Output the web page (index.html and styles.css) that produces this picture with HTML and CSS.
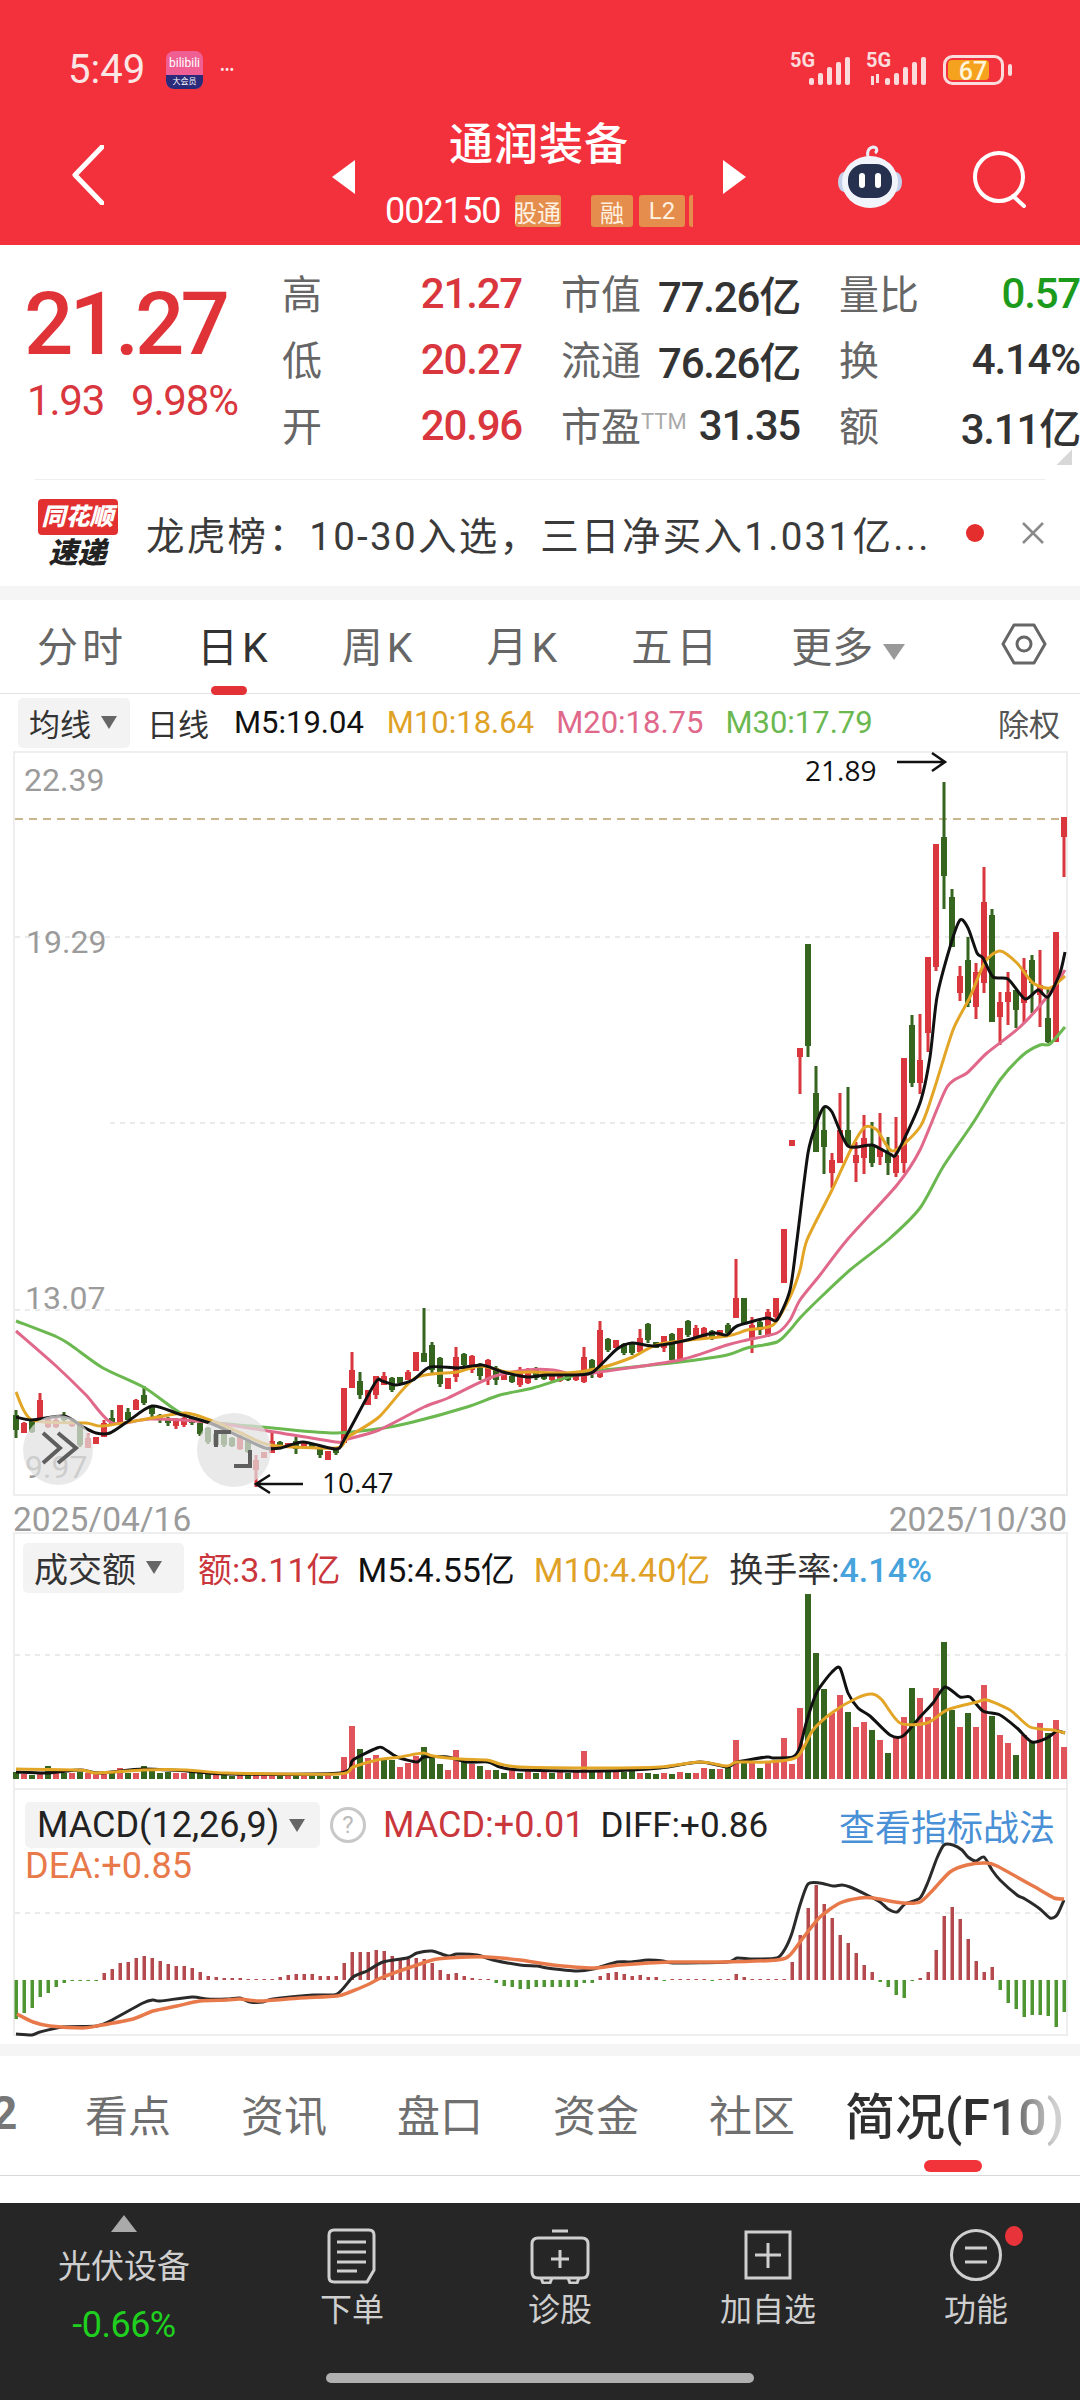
FILE: index.html
```html
<!DOCTYPE html>
<html lang="zh-CN">
<head>
<meta charset="UTF-8">
<meta name="viewport" content="width=device-width, initial-scale=1.0">
<title>通润装备</title>
<link rel="stylesheet" href="styles.css">
</head>
<body>

<header class="topbar">
    <div class="status">
        <span class="clock">5:49</span>
        <div class="app-badge">
            <span class="app-name">bilibili</span>
            <span class="app-sub">大会员</span>
        </div>
        <span class="status-dots">•••</span>
        <svg class="signal" width="222" height="40" viewBox="0 0 222 40">
            <text x="0" y="17" class="signal-text">5G</text>
            <rect x="19" y="28" width="5" height="7" rx="2"/><rect x="28" y="23" width="5" height="12" rx="2"/><rect x="37" y="17" width="5" height="18" rx="2"/><rect x="46" y="12" width="5" height="23" rx="2"/><rect x="55" y="7" width="5" height="28" rx="2"/>
            <text x="76" y="17" class="signal-text">5G</text>
            <rect x="81" y="26" width="3" height="9"/><rect x="86" y="24" width="3" height="9"/>
            <rect x="95" y="28" width="5" height="7" rx="2"/><rect x="104" y="23" width="5" height="12" rx="2"/><rect x="113" y="17" width="5" height="18" rx="2"/><rect x="122" y="12" width="5" height="23" rx="2"/><rect x="131" y="7" width="5" height="28" rx="2"/>
            <rect x="154.500" y="6.500" width="58" height="27" rx="8" fill="none" stroke="#fbdcdc" stroke-width="3"/>
            <rect x="158" y="10" width="41" height="20" rx="4" fill="#f5a21f"/>
            <text x="183" y="30" class="battery-text" text-anchor="middle">67</text>
            <rect x="218" y="14" width="4" height="12" rx="2"/>
        </svg>
    </div>
    <div class="stock-nav">
        <svg class="nav-back" width="32" height="60" viewBox="0 0 32 60"><path d="M30 2 L3 30 L30 58" fill="none" stroke="#fff" stroke-width="5" stroke-linecap="round" stroke-linejoin="round"/></svg>
        <div class="stock-switch">
            <span class="tri tri-left"></span>
            <div class="stock-head">
                <div class="stock-name">通润装备</div>
                <div class="stock-code-row">
                    <span class="stock-code">002150</span>
                    <div class="tags">
                        <span class="tag tag-cut">深股通</span>
                        <span class="tag tag-rong">融</span>
                        <span class="tag tag-l2">L2</span>
                        <span class="tag tag-end"></span>
                    </div>
                </div>
            </div>
            <span class="tri tri-right"></span>
        </div>
        <svg class="nav-robot" width="68" height="64" viewBox="0 0 68 64">
            <path d="M33 14 C30 8 32 3 37 2 C41 2 42 6 39 8" fill="none" stroke="#e9edf6" stroke-width="3"/>
            <ellipse cx="8" cy="37" rx="6" ry="10" fill="#c3d0ea"/>
            <ellipse cx="60" cy="37" rx="6" ry="10" fill="#c3d0ea"/>
            <ellipse cx="34" cy="37" rx="28" ry="26" fill="#f2f4fb"/>
            <rect x="12" y="19" width="44" height="34" rx="16" fill="#26304f"/>
            <rect x="23" y="28" width="6" height="15" rx="3" fill="#fff"/>
            <rect x="39" y="28" width="6" height="15" rx="3" fill="#fff"/>
        </svg>
        <svg class="nav-search" width="56" height="58" viewBox="0 0 56 58"><circle cx="27" cy="27" r="24" fill="none" stroke="#fff" stroke-width="4"/><path d="M41 46 L52 56" stroke="#fff" stroke-width="4" stroke-linecap="round"/></svg>
    </div>
</header>

<section class="quote">
    <div class="quote-main">
        <div class="price">21.27</div>
        <div class="price-change"><span>1.93</span><span>9.98%</span></div>
    </div>
    <div class="quote-grid">
        <div class="cell"><span class="lbl">高</span><span class="val red">21.27</span></div>
        <div class="cell"><span class="lbl">市值</span><span class="val">77.26亿</span></div>
        <div class="cell"><span class="lbl">量比</span><span class="val green">0.57</span></div>
        <div class="cell"><span class="lbl">低</span><span class="val red">20.27</span></div>
        <div class="cell"><span class="lbl">流通</span><span class="val">76.26亿</span></div>
        <div class="cell"><span class="lbl">换</span><span class="val">4.14%</span></div>
        <div class="cell"><span class="lbl">开</span><span class="val red">20.96</span></div>
        <div class="cell"><span class="lbl">市盈<sup class="ttm">TTM</sup></span><span class="val">31.35</span></div>
        <div class="cell"><span class="lbl">额</span><span class="val">3.11亿</span></div>
    </div>
    <span class="quote-fold"></span>
</section>

<section class="news">
    <div class="news-logo">
        <span class="news-logo-top">同花顺</span>
        <span class="news-logo-bottom">速递</span>
    </div>
    <div class="news-text">龙虎榜：10-30入选，三日净买入1.031亿...</div>
    <span class="news-dot"></span>
    <svg class="news-close" width="24" height="24" viewBox="0 0 24 24"><path d="M2 2 L22 22 M22 2 L2 22" stroke="#8a8a8a" stroke-width="2.5"/></svg>
</section>
<div class="gap"></div>

<nav class="period-tabs">
    <span class="period">分时</span>
    <span class="period active">日K</span>
    <span class="period">周K</span>
    <span class="period">月K</span>
    <span class="period">五日</span>
    <span class="period more">更多<i class="caret-more"></i></span>
    <svg class="period-set" width="46" height="46" viewBox="0 0 46 46"><path d="M13 4 H33 L44 23 L33 42 H13 L2 23 Z" fill="none" stroke="#666" stroke-width="3" stroke-linejoin="round"/><circle cx="23" cy="23" r="7" fill="none" stroke="#666" stroke-width="3"/></svg>
</nav>

<div class="legend legend-k">
    <span class="chip chip-ma">均线<i class="caret"></i></span>
    <span class="legend-day">日线</span>
    <span class="m5">M5:19.04</span>
    <span class="m10">M10:18.64</span>
    <span class="m20">M20:18.75</span>
    <span class="m30">M30:17.79</span>
    <span class="legend-right">除权</span>
</div>

<div class="panel panel-k">
    <svg id="klineChart" class="chart" width="1080" height="741" viewBox="0 753 1080 741">
        <line x1="15" x2="1066" y1="819" y2="819" class="line-close"/>
        <line x1="15" x2="1066" y1="937" y2="937" class="line-grid"/>
        <line x1="110" x2="1066" y1="1123" y2="1123" class="line-grid"/>
        <line x1="15" x2="1066" y1="1310" y2="1310" class="line-grid"/>
        <text x="24" y="791" class="axis-label">22.39</text>
        <text x="26" y="953" class="axis-label">19.29</text>
        <text x="25" y="1309" class="axis-label">13.07</text>
        <text x="25" y="1478" class="axis-label">9.97</text>
        <g id="klineBars"></g>
        <g id="klineLines"></g>
        <text x="805" y="781" class="mark-label">21.89</text>
        <path d="M897 762 H945 M932 753 L945 762 L932 771" class="mark-arrow"/>
        <path d="M303 1484 H256 M270 1475 L256 1484 L270 1493" class="mark-arrow"/>
        <text x="322" y="1493" class="mark-label">10.47</text>
        <circle cx="58" cy="1450" r="35" class="float-btn"/>
        <path d="M43 1433 L60 1448 L43 1463 M58 1433 L76 1448 L58 1463" class="float-icon"/>
        <circle cx="234" cy="1450" r="37" class="float-btn"/>
        <path d="M216 1447 V1432 H231 M250 1450 V1466 H234" class="float-icon"/>
    </svg>
</div>

<div class="date-row"><span>2025/04/16</span><span>2025/10/30</span></div>

<div class="panel panel-vol">
    <div class="legend legend-vol">
        <span class="chip chip-vol">成交额<i class="caret"></i></span>
        <span class="vol-amount">额:3.11亿</span>
        <span class="vol-m5">M5:4.55亿</span>
        <span class="vol-m10">M10:4.40亿</span>
        <span class="vol-turn">换手率:<b>4.14%</b></span>
    </div>
    <svg id="volChart" class="chart" width="1080" height="193" viewBox="0 1595 1080 193">
        <line x1="15" x2="1066" y1="1655" y2="1655" class="line-grid"/>
        <g id="volBars"></g>
        <g id="volLines"></g>
    </svg>
</div>

<div class="panel panel-macd">
    <svg id="macdChart" class="chart" width="1080" height="244" viewBox="0 1790 1080 244">
        <line x1="15" x2="1066" y1="1913" y2="1913" class="line-grid"/>
        <g id="macdBars"></g>
        <g id="macdLines"></g>
    </svg>
    <div class="macd-legend">
        <div class="macd-row">
            <span class="chip chip-macd">MACD(12,26,9)<i class="caret"></i></span>
            <span class="help">?</span>
            <span class="macd-val">MACD:+0.01</span>
            <span class="diff-val">DIFF:+0.86</span>
            <span class="macd-link">查看指标战法</span>
        </div>
        <div class="dea-val">DEA:+0.85</div>
    </div>
</div>

<div class="gap gap-low"></div>

<nav class="info-tabs">
    <span class="info-cut">2</span>
    <span class="info">看点</span>
    <span class="info">资讯</span>
    <span class="info">盘口</span>
    <span class="info">资金</span>
    <span class="info">社区</span>
    <span class="info info-active"><em>简况(F10)</em></span>
</nav>

<footer class="bottom">
    <div class="bottom-items">
        <div class="sector">
            <span class="sector-up"></span>
            <span class="sector-name">光伏设备</span>
            <span class="sector-pct">-0.66%</span>
        </div>
        <div class="action">
            <svg width="50" height="56" viewBox="0 0 50 56" class="action-icon">
                <path d="M7 2 H42 Q47 2 47 7 V42 L40 54 H7 Q2 54 2 49 V7 Q2 2 7 2 Z M10 14 H39 M10 24 H39 M10 34 H39 M10 43 H30"/>
            </svg>
            <span>下单</span>
        </div>
        <div class="action">
            <svg width="60" height="56" viewBox="0 0 60 56" class="action-icon">
                <path d="M22 3 H38 M8 10 H52 Q58 10 58 16 V44 Q58 50 52 50 H8 Q2 50 2 44 V16 Q2 10 8 10 Z M30 22 V40 M21 31 H39 M11 50 L13 55 H20 L22 50 M38 50 L40 55 H47 L49 50"/>
            </svg>
            <span>诊股</span>
        </div>
        <div class="action">
            <svg width="50" height="56" viewBox="0 0 50 56" class="action-icon">
                <path d="M3 4 H47 V50 H3 Z M25 15 V40 M12 27 H38"/>
            </svg>
            <span>加自选</span>
        </div>
        <div class="action action-fn">
            <svg width="54" height="56" viewBox="0 0 54 56" class="action-icon">
                <circle cx="27" cy="27" r="24.5"/>
                <path d="M16 20 H38 M16 34 H38"/>
            </svg>
            <i class="fn-dot"></i>
            <span>功能</span>
        </div>
    </div>
    <div class="home-bar"></div>
</footer>

<script src="chart.js"></script>
</body>
</html>
```

FILE: styles.css
```css
* {
    box-sizing: border-box;
}
body {
    margin: 0;
    width: 1080px;
    height: 2400px;
    overflow: hidden;
    background: #fff;
    color: #333;
    font-family: Roboto, "Noto Sans CJK SC", sans-serif;
}

/* red header */
.topbar {
    height: 245px;
    overflow: hidden;
    background: #f3313d;
    color: #fff;
}
.status {
    display: flex;
    align-items: center;
    height: 90px;
    padding: 50px 0 0 68px;
}
.clock {
    width: 98px;
    font-size: 40px;
    line-height: 40px;
    color: #fbe6e6;
}
.app-badge {
    display: flex;
    flex-direction: column;
    width: 37px;
    height: 38px;
    border-radius: 8px;
    overflow: hidden;
    text-align: center;
    background: #ef5f93;
}
.app-name {
    height: 24px;
    font-size: 12px;
    line-height: 24px;
}
.app-sub {
    height: 14px;
    font-size: 8px;
    line-height: 14px;
    background: #2b2a7a;
}
.status-dots {
    width: 32px;
    margin-left: 17px;
    font-size: 14px;
    letter-spacing: 0;
    color: #fbe6e6;
}
.signal {
    margin-left: 538px;
    fill: #fbdcdc;
}
.signal-text {
    font-size: 20px;
    font-weight: 700;
}
.battery-text {
    font-size: 25px;
    font-weight: 500;
    fill: #fff3d8;
}
.stock-nav {
    display: flex;
    align-items: flex-start;
    padding: 30px 0 0 72px;
}
.nav-back {
    margin-top: 25px;
}
.stock-switch {
    display: flex;
    justify-content: space-between;
    width: 414px;
    margin-left: 228px;
}
.tri {
    width: 0;
    height: 0;
    margin-top: 40px;
    border-top: 17px solid transparent;
    border-bottom: 17px solid transparent;
}
.tri-left {
    border-right: 23px solid #fff;
}
.tri-right {
    border-left: 23px solid #fff;
}
.stock-head {
    width: 308px;
    text-align: center;
}
.stock-name {
    font-size: 44px;
    line-height: 50px;
    letter-spacing: 1px;
    font-weight: 500;
}
.stock-code-row {
    display: flex;
    align-items: center;
    height: 32px;
    margin-top: 25px;
}
.stock-code {
    width: 130px;
    font-size: 36px;
    line-height: 32px;
    letter-spacing: -1px;
    text-align: left;
}
.tags {
    display: flex;
    flex: 1;
    overflow: hidden;
}
.tag {
    display: flex;
    align-items: center;
    justify-content: center;
    flex: none;
    height: 32px;
    border-radius: 3px;
    background: #e58d4c;
    color: #fff1e2;
    font-size: 24px;
}
.tag-cut {
    justify-content: flex-end;
    width: 46px;
    overflow: hidden;
    margin-right: 30px;
    white-space: nowrap;
}
.tag-rong {
    width: 42px;
    margin-right: 6px;
}
.tag-l2 {
    width: 46px;
    margin-right: 4px;
}
.tag-end {
    width: 8px;
}
.nav-robot {
    margin: 25px 0 0 90px;
}
.nav-search {
    margin: 30px 0 0 68px;
}

/* price block */
.quote {
    display: flex;
    position: relative;
    height: 234px;
    padding: 15px 0 0 24px;
}
.quote-main {
    width: 258px;
}
.price {
    margin-top: 19px;
    font-size: 87px;
    line-height: 90px;
    letter-spacing: -4px;
    font-weight: 500;
    color: #df3338;
}
.price-change {
    display: flex;
    gap: 27px;
    margin-top: 10px;
    padding-left: 3px;
    font-size: 42px;
    line-height: 44px;
    letter-spacing: -1.2px;
    color: #d9363e;
}
.quote-grid {
    display: grid;
    grid-template-columns: 240px 239px 241px;
    grid-auto-rows: 66px;
    column-gap: 39px;
}
.cell {
    display: flex;
    justify-content: space-between;
    align-items: center;
}
.lbl {
    margin-top: -3px;
    font-size: 40px;
    color: #666;
    white-space: nowrap;
}
.ttm {
    font-size: 22px;
    line-height: 1;
    color: #aaa;
    vertical-align: 12px;
}
.val {
    font-size: 42px;
    letter-spacing: -1.2px;
    font-weight: 500;
    color: #333;
    white-space: nowrap;
}
.red {
    color: #d9363e;
}
.green {
    color: #1c9a1c;
}
.quote-fold {
    position: absolute;
    right: 8px;
    top: 205px;
    width: 16px;
    height: 15px;
    background: linear-gradient(135deg, transparent 50%, #d8d8d8 50%);
}

/* news ticker */
.news {
    display: flex;
    align-items: center;
    height: 107px;
    margin: 0 35px;
    border-top: 1px solid #eee;
}
.news-logo {
    display: flex;
    flex-direction: column;
    align-items: center;
    width: 81px;
    margin-left: 2px;
    font-style: italic;
    font-weight: 900;
}
.news-logo-top {
    width: 80px;
    height: 36px;
    border-radius: 4px;
    background: #e1302f;
    color: #fff;
    font-size: 24px;
    line-height: 36px;
    text-align: center;
}
.news-logo-bottom {
    margin-top: 3px;
    font-size: 29px;
    line-height: 30px;
    color: #222;
}
.news-text {
    width: 780px;
    margin-left: 28px;
    font-size: 38.5px;
    letter-spacing: 2.3px;
    white-space: nowrap;
    color: #3a3a3a;
}
.news-dot {
    flex: none;
    width: 18px;
    height: 18px;
    margin-left: 40px;
    border-radius: 50%;
    background: #e42d2d;
}
.news-close {
    flex: none;
    margin-left: 37px;
}
.gap {
    height: 14px;
    background: #f5f5f5;
}

/* period tabs */
.period-tabs {
    display: flex;
    align-items: center;
    height: 94px;
    padding: 0 0 6px 37px;
    border-bottom: 1px solid #e3e3e3;
}
.period {
    position: relative;
    margin-right: 70px;
    font-size: 41px;
    color: #666;
    letter-spacing: 4px;
}
.period.active {
    color: #333;
}
.period.active::after {
    content: "";
    position: absolute;
    left: 14px;
    bottom: -21px;
    width: 36px;
    height: 9px;
    border-radius: 5px;
    background: #e33237;
}
.period.more {
    margin-right: 0;
    letter-spacing: 0;
}
.caret-more {
    display: inline-block;
    margin-left: 10px;
    border-top: 16px solid #999;
    border-left: 11px solid transparent;
    border-right: 11px solid transparent;
    vertical-align: 2px;
}
.period-set {
    margin-left: 96px;
}

/* indicator legends */
.legend {
    display: flex;
    align-items: center;
    white-space: nowrap;
}
.legend-k {
    height: 57px;
    padding-left: 18px;
    font-size: 31px;
    color: #111;
}
.chip {
    display: flex;
    align-items: center;
    border-radius: 5px;
    background: #f3f3f3;
    color: #333;
}
.chip-ma {
    width: 112px;
    height: 50px;
    padding-left: 11px;
}
.caret {
    margin-left: 10px;
    border-top: 13px solid #666;
    border-left: 8px solid transparent;
    border-right: 8px solid transparent;
}
.legend-day {
    margin-left: 17px;
    color: #333;
}
.m5 {
    margin-left: 25px;
}
.m10 {
    margin-left: 23px;
    color: #dfa227;
}
.m20 {
    margin-left: 22px;
    color: #e0688a;
}
.m30 {
    margin-left: 22px;
    color: #6ab84f;
}
.legend-right {
    margin-left: auto;
    margin-right: 20px;
    color: #555;
}

/* chart panels */
.panel {
    position: relative;
    width: 1055px;
    margin-left: 13px;
    border: 2px solid #eee;
}
.panel-macd {
    border-top: 0;
}
.chart {
    display: block;
    margin-left: -15px;
    overflow: visible;
}
.line-grid {
    stroke: #e4e4e4;
    stroke-width: 1.5;
    stroke-dasharray: 5 5;
}
.line-close {
    stroke: #c9b68f;
    stroke-width: 2;
    stroke-dasharray: 8 6;
}
.axis-label {
    font-size: 32px;
    fill: #9b9b9b;
}
.mark-label {
    font-family: "Open Sans", sans-serif;
    font-size: 28px;
    fill: #111;
}
.mark-arrow {
    fill: none;
    stroke: #111;
    stroke-width: 2.5;
}
.float-btn {
    fill: rgba(225, 225, 225, 0.72);
}
.float-icon {
    fill: none;
    stroke: #5e5e5e;
    stroke-width: 4;
}
.date-row {
    display: flex;
    justify-content: space-between;
    height: 36px;
    padding: 12px 13px 0 13px;
    font-size: 33.5px;
    line-height: 24px;
    color: #9b9b9b;
}
.legend-vol {
    height: 61px;
    padding: 6px 0 0 8px;
    font-size: 34px;
    color: #111;
}
.chip-vol {
    width: 161px;
    height: 50px;
    padding-left: 11px;
}
.vol-amount {
    margin-left: 14px;
    color: #c9363c;
}
.vol-m5 {
    margin-left: 17px;
}
.vol-m10 {
    margin-left: 19px;
    color: #dfa227;
}
.vol-turn {
    margin-left: 19px;
    color: #333;
}
.vol-turn b {
    font-weight: 500;
    color: #46a3dc;
}
.macd-legend {
    position: absolute;
    left: 10px;
    top: 12px;
    width: 1030px;
    font-size: 36px;
}
.macd-row {
    display: flex;
    align-items: center;
    height: 46px;
    white-space: nowrap;
}
.chip-macd {
    width: 295px;
    height: 46px;
    padding-left: 12px;
    color: #222;
}
.help {
    width: 36px;
    height: 36px;
    margin-left: 10px;
    border: 3px solid #c8c8c8;
    border-radius: 50%;
    font-size: 24px;
    line-height: 30px;
    text-align: center;
    color: #bbb;
}
.macd-val {
    margin-left: 17px;
    color: #c9363c;
}
.diff-val {
    margin-left: 16px;
    font-size: 35px;
    color: #222;
}
.macd-link {
    margin-left: auto;
    font-size: 36px;
    color: #4a90d6;
}
.dea-val {
    line-height: 36px;
    color: #e8794a;
}

/* info tabs */
.gap-low {
    height: 12px;
    margin-top: 8px;
}
.info-tabs {
    display: flex;
    align-items: center;
    height: 120px;
    padding-bottom: 6px;
    overflow: hidden;
    border-bottom: 1px solid #d8d8d8;
}
.info-cut {
    width: 24px;
    margin-left: -9px;
    margin-right: 70px;
    font-size: 46px;
    font-weight: 700;
    color: #777;
}
.info {
    position: relative;
    margin-right: 70px;
    font-size: 43px;
    color: #6f6f6f;
    white-space: nowrap;
}
.info-active {
    margin-left: -20px;
    margin-right: 0;
    font-size: 50px;
    font-weight: 500;
}
.info-active em {
    font-style: normal;
    background: linear-gradient(90deg, #2f2f2f 68%, #d0d0d0 96%);
    -webkit-background-clip: text;
    background-clip: text;
    color: transparent;
}
.info-active::after {
    content: "";
    position: absolute;
    left: 79px;
    bottom: -23px;
    width: 58px;
    height: 12px;
    border-radius: 6px;
    background: #f1333a;
}

/* dark bottom bar */
.bottom {
    height: 197px;
    margin-top: 27px;
    background: #262626;
    color: #cfcfcf;
}
.bottom-items {
    display: flex;
    height: 170px;
}
.sector {
    display: flex;
    flex-direction: column;
    align-items: center;
    width: 248px;
    padding-top: 12px;
}
.sector-up {
    border-bottom: 17px solid #aaa;
    border-left: 13px solid transparent;
    border-right: 13px solid transparent;
}
.sector-name {
    margin-top: 17px;
    font-size: 33px;
    line-height: 36px;
}
.sector-pct {
    margin-top: 22px;
    font-size: 36px;
    line-height: 36px;
    letter-spacing: -0.5px;
    color: #1fd01f;
}
.action {
    display: flex;
    flex-direction: column;
    align-items: center;
    position: relative;
    width: 208px;
    padding-top: 25px;
    font-size: 32px;
    line-height: 36px;
}
.action span {
    margin-top: 8px;
}
.action-icon {
    fill: none;
    stroke: #cfcfcf;
    stroke-width: 3;
}
.fn-dot {
    position: absolute;
    left: 133px;
    top: 23px;
    width: 18px;
    height: 20px;
    border-radius: 50%;
    background: #e8333a;
}
.home-bar {
    width: 428px;
    height: 10px;
    margin-left: 326px;
    border-radius: 5px;
    background: #b0b0b0;
}
```

FILE: chart.js
```js
// candles left to right, one every 8px from x=16: colour, wick top, wick bottom, body top, body bottom
const candles = [
    ['g',1410,1438,1415,1430],['r',1422,1433,1423,1433],['g',1420,1433,1421,1432],['r',1393,1418,1400,1418],
    ['r',1418,1428,1419,1427],['r',1417,1428,1420,1427],['g',1412,1423,1415,1420],['r',1420,1427,1421,1426],
    ['g',1423,1447,1425,1445],['r',1433,1448,1438,1448],['r',1437,1444,1437,1444],['r',1420,1437,1423,1437],
    ['g',1410,1425,1418,1425],['r',1405,1425,1405,1424],['g',1408,1420,1412,1420],['r',1399,1410,1400,1410],
    ['g',1386,1405,1395,1403],['g',1405,1417,1406,1414],['g',1414,1423,1415,1420],['g',1417,1426,1418,1423],
    ['r',1418,1429,1419,1426],['r',1417,1427,1418,1425],['g',1417,1425,1418,1423],['g',1422,1436,1423,1434],
    ['g',1427,1444,1428,1442],['g',1432,1447,1434,1445],['g',1432,1447,1434,1445],['g',1437,1447,1438,1446],
    ['r',1435,1450,1436,1449],['g',1440,1453,1441,1452],['r',1455,1487,1460,1470],['r',1452,1458,1452,1458],
    ['r',1433,1453,1441,1453],['g',1441,1448,1442,1447],['r',1443,1448,1443,1448],['g',1437,1454,1441,1449],
    ['r',1441,1448,1441,1448],['g',1443,1448,1443,1448],['g',1447,1458,1447,1455],['r',1451,1460,1451,1460],
    ['g',1447,1455,1448,1453],['r',1388,1443,1388,1443],['r',1352,1388,1370,1388],['g',1372,1399,1381,1395],
    ['r',1390,1405,1390,1405],['r',1376,1399,1376,1395],['r',1372,1385,1376,1385],['g',1377,1392,1378,1390],
    ['g',1377,1383,1377,1383],['r',1370,1380,1372,1380],['r',1352,1371,1352,1371],['g',1308,1362,1353,1362],
    ['g',1342,1375,1345,1370],['g',1357,1387,1358,1384],['r',1378,1389,1378,1389],['r',1347,1382,1357,1377],
    ['g',1353,1370,1354,1365],['r',1355,1373,1356,1370],['g',1363,1380,1364,1376],['r',1359,1385,1360,1380],
    ['g',1366,1385,1368,1380],['r',1372,1380,1372,1380],['g',1375,1383,1376,1382],['r',1367,1387,1372,1385],
    ['r',1368,1384,1370,1383],['g',1367,1380,1368,1378],['g',1375,1380,1375,1379],['r',1373,1381,1373,1380],
    ['r',1372,1382,1373,1381],['g',1373,1381,1374,1380],['r',1375,1381,1375,1380],['r',1347,1383,1357,1382],
    ['g',1359,1378,1360,1372],['r',1321,1378,1330,1377],['g',1338,1352,1339,1350],['r',1340,1348,1340,1348],
    ['g',1343,1355,1344,1353],['g',1343,1355,1344,1353],['r',1329,1353,1338,1352],['g',1323,1343,1324,1340],
    ['g',1342,1348,1342,1348],['r',1336,1352,1336,1348],['g',1333,1362,1334,1360],['r',1328,1362,1328,1360],
    ['g',1320,1337,1321,1335],['r',1325,1340,1328,1338],['r',1327,1338,1328,1338],['g',1330,1340,1331,1339],
    ['r',1330,1337,1330,1337],['g',1323,1335,1325,1333],['r',1259,1318,1298,1318],['g',1298,1323,1298,1323],
    ['r',1317,1353,1325,1338],['g',1318,1335,1322,1330],['r',1309,1337,1312,1335],['r',1298,1320,1298,1317],
    ['r',1229,1283,1229,1283],['r',1140,1146,1140,1146],['r',1048,1094,1048,1057],['g',944,1057,944,1046],
    ['g',1066,1152,1093,1152],['g',1108,1174,1130,1147],['r',1153,1188,1160,1173],['r',1093,1163,1130,1163],
    ['g',1087,1147,1130,1145],['r',1142,1182,1155,1163],['r',1115,1174,1138,1158],['g',1122,1167,1145,1163],
    ['r',1113,1165,1148,1157],['g',1137,1175,1153,1163],['r',1117,1177,1155,1173],['r',1058,1173,1058,1163],
    ['g',1015,1087,1025,1083],['r',1014,1094,1060,1083],['r',957,1052,957,1033],['r',844,971,844,967],
    ['g',782,909,837,876],['g',889,947,897,947],['r',966,1001,976,993],['g',937,1007,960,1003],
    ['r',963,1019,972,1007],['r',867,993,902,983],['g',909,1022,915,1022],['r',992,1045,1002,1017],
    ['r',972,1025,992,1002],['g',990,1028,990,1010],['r',958,1023,970,1003],['g',955,1013,960,983],
    ['r',950,1027,985,995],['g',987,1043,1018,1042],['r',932,1042,932,1042],['r',817,877,817,837]
];

// volume height per bar, negative means a green bar
const volumes = [
    -7,5,-4,6,-13,7,-6,6,-7,6,6,6,-6,11,-6,6,-13,-8,-6,-7,6,6,-7,-6,-6,6,-5,-3,5,-5,4,5,6,-3,4,-4,5,-3,-3,4,-3,
    22,53,-30,21,24,-19,-19,12,16,23,-32,-21,-15,9,29,-17,15,-13,9,-9,-6,9,-6,
    8,-6,7,-6,7,-6,8,28,-8,7,-9,9,-7,-8,6,-6,-5,6,-5,7,-6,6,
    11,-10,10,-11,39,-18,18,-11,18,18,41,15,71,-185,-126,-90,66,84,-67,52,57,-49,39,-26,43,62,-91,81,62,91,-137,-69,52,-66,52,94,-63,44,36,-24,44,-38,56,-46,59,32
];

// macd histogram per bar
const macd = [
    -39,-33,-28,-17,-13,-7,-3,-1,-1,-1,-1,7,11,17,18,22,24,22,19,16,14,14,12,8,4,3,2,2,2,1,1,1,1,3,5,6,6,6,4,4,4,
    17,28,28,28,30,29,24,20,21,22,21,17,10,6,7,4,2,1,1,-3,-6,-7,-9,-9,-7,-7,-7,-7,-7,-7,-3,-3,4,7,8,6,4,5,3,3,-1,
    1,1,1,1,1,-1,1,1,6,3,1,1,1,1,1,18,45,72,95,76,62,45,37,27,15,8,-2,-7,-15,-18,-1,2,8,30,64,73,61,41,19,8,13,
    -10,-23,-29,-37,-35,-35,-36,-47,-32,0
];

const NS = 'http://www.w3.org/2000/svg';
const RED = '#d9363e';
const GREEN = '#35651f';

function barX(i) {
    return 16 + i * 8;
}

function addRect(group, x, y, w, h, fill) {
    const r = document.createElementNS(NS, 'rect');
    r.setAttribute('x', x);
    r.setAttribute('y', y);
    r.setAttribute('width', w);
    r.setAttribute('height', Math.max(h, 1));
    r.setAttribute('fill', fill);
    group.appendChild(r);
}

// smooth curve through the points
function addCurve(group, pts, color, width) {
    let d = 'M' + pts[0][0] + ' ' + pts[0][1];
    for (let i = 0; i < pts.length - 1; i++) {
        const p0 = pts[Math.max(i - 1, 0)];
        const p1 = pts[i];
        const p2 = pts[i + 1];
        const p3 = pts[Math.min(i + 2, pts.length - 1)];
        const c1x = p1[0] + (p2[0] - p0[0]) / 8;
        const c1y = p1[1] + (p2[1] - p0[1]) / 8;
        const c2x = p2[0] - (p3[0] - p1[0]) / 8;
        const c2y = p2[1] - (p3[1] - p1[1]) / 8;
        d += ' C' + c1x + ' ' + c1y + ' ' + c2x + ' ' + c2y + ' ' + p2[0] + ' ' + p2[1];
    }
    const path = document.createElementNS(NS, 'path');
    path.setAttribute('d', d);
    path.setAttribute('fill', 'none');
    path.setAttribute('stroke', color);
    path.setAttribute('stroke-width', width);
    path.setAttribute('stroke-linejoin', 'round');
    group.appendChild(path);
}

// candles
const klineBars = document.getElementById('klineBars');
candles.forEach((c, i) => {
    const fill = c[0] === 'r' ? RED : GREEN;
    const x = barX(i);
    addRect(klineBars, x - 1.5, c[1], 3, c[2] - c[1], fill);
    addRect(klineBars, x - 3, c[3], 6, c[4] - c[3], fill);
});

// moving averages
const m30 = [[16,1321],[57,1337],[72,1346],[103,1368],[145,1388],[179,1412],[210,1422],[262,1427],[331,1433],[377,1429],[413,1422],[467,1407],[500,1395],[533,1388],[583,1373],[633,1367],[680,1362],[727,1355],[747,1348],[777,1342],[790,1330],[800,1318],[820,1298],[850,1270],[888,1240],[920,1208],[943,1167],[973,1123],[1000,1080],[1023,1055],[1040,1045],[1050,1044],[1065,1027]];
const m20 = [[16,1331],[55,1365],[86,1395],[112,1423],[150,1419],[207,1422],[262,1430],[336,1442],[344,1440],[379,1430],[424,1407],[448,1398],[492,1377],[527,1370],[553,1370],[577,1375],[600,1372],[680,1360],[727,1345],[747,1340],[777,1333],[790,1320],[800,1300],[820,1275],[847,1240],[897,1185],[920,1150],[947,1087],[967,1073],[987,1053],[1020,1027],[1047,997],[1065,970]];
const m10 = [[16,1392],[32,1420],[86,1423],[103,1426],[152,1418],[186,1413],[210,1420],[241,1433],[270,1445],[336,1448],[348,1437],[379,1417],[415,1378],[457,1372],[480,1366],[507,1372],[533,1372],[567,1373],[600,1368],[633,1357],[660,1344],[727,1336],[747,1330],[773,1325],[790,1297],[800,1270],[807,1240],[832,1190],[853,1145],[865,1127],[877,1130],[893,1151],[920,1127],[933,1093],[953,1030],[970,997],[985,962],[1000,951],[1017,963],[1033,983],[1050,988],[1065,976]];
const m5 = [[16,1417],[32,1420],[64,1416],[83,1427],[96,1433],[110,1433],[127,1422],[152,1406],[179,1414],[210,1423],[241,1437],[265,1448],[281,1448],[303,1442],[336,1449],[344,1440],[375,1383],[382,1381],[396,1385],[413,1380],[430,1367],[458,1368],[482,1365],[503,1372],[527,1377],[547,1375],[577,1375],[593,1372],[617,1349],[632,1343],[653,1346],[683,1341],[713,1333],[727,1335],[737,1326],[767,1318],[777,1320],[790,1290],[797,1240],[808,1153],[817,1122],[824,1107],[832,1112],[848,1146],[872,1145],[890,1154],[897,1153],[920,1103],[930,1057],[937,997],[950,947],[960,920],[968,928],[977,953],[983,958],[993,977],[1008,979],[1025,999],[1038,990],[1048,997],[1060,973],[1065,952]];

const klineLines = document.getElementById('klineLines');
addCurve(klineLines, m30, '#6ab84f', 3);
addCurve(klineLines, m20, '#e0688a', 3);
addCurve(klineLines, m10, '#e3a526', 3);
addCurve(klineLines, m5, '#111', 3);

// volume
const volBars = document.getElementById('volBars');
volumes.forEach((v, i) => {
    const h = Math.abs(v);
    addRect(volBars, barX(i) - 3, 1779 - h, 6, h, v > 0 ? '#e0555c' : GREEN);
});

const volM5 = [[16,1772],[47,1773],[80,1770],[100,1773],[143,1769],[187,1771],[227,1774],[340,1773],[353,1760],[377,1748],[383,1748],[397,1757],[417,1762],[424,1757],[447,1757],[467,1762],[488,1762],[500,1767],[520,1770],[600,1771],[660,1768],[700,1762],[727,1767],[737,1762],[767,1757],[773,1758],[793,1757],[800,1747],[807,1720],[817,1692],[832,1672],[840,1668],[848,1693],[858,1708],[870,1716],[890,1735],[903,1736],[920,1717],[933,1703],[945,1687],[960,1697],[970,1697],[983,1711],[1000,1715],[1017,1728],[1032,1742],[1047,1738],[1057,1731],[1065,1733]];
const volM10 = [[16,1769],[80,1770],[97,1773],[143,1770],[187,1770],[227,1773],[338,1774],[353,1767],[377,1760],[400,1757],[423,1753],[433,1756],[460,1759],[487,1760],[500,1764],[520,1767],[600,1768],[660,1767],[700,1762],[727,1766],[737,1762],[767,1762],[797,1757],[813,1730],[833,1712],[857,1698],[872,1694],[882,1700],[900,1723],[927,1723],[947,1710],[977,1702],[987,1700],[1010,1710],[1030,1727],[1053,1730],[1065,1733]];
const volLines = document.getElementById('volLines');
addCurve(volLines, volM5, '#111', 3);
addCurve(volLines, volM10, '#e3a526', 3);

// macd
const macdBars = document.getElementById('macdBars');
macd.forEach((v, i) => {
    if (v > 0) {
        addRect(macdBars, barX(i) - 1.5, 1980 - v, 3.5, v, '#b54a4e');
    } else if (v < 0) {
        addRect(macdBars, barX(i) - 1.5, 1980, 3.5, -v, '#4f9632');
    }
});

const diff = [[16,2034],[32,2035],[40,2032],[63,2027],[97,2026],[110,2021],[143,2003],[153,2000],[160,2001],[192,1997],[207,1999],[227,1999],[240,1998],[250,2002],[263,2002],[273,1999],[313,1995],[337,1994],[353,1977],[367,1971],[383,1962],[407,1958],[417,1953],[432,1951],[448,1956],[457,1954],[477,1955],[493,1960],[520,1965],[537,1966],[547,1968],[577,1971],[593,1969],[617,1962],[630,1962],[648,1960],[663,1961],[673,1963],[727,1962],[737,1958],[753,1959],[777,1958],[785,1949],[792,1933],[800,1905],[808,1884],[820,1883],[833,1886],[842,1885],[850,1887],[867,1895],[880,1902],[888,1909],[897,1912],[905,1904],[920,1898],[928,1882],[937,1858],[944,1845],[953,1845],[962,1850],[968,1857],[976,1861],[984,1857],[992,1870],[1000,1880],[1017,1895],[1025,1899],[1040,1909],[1050,1918],[1057,1915],[1064,1900]];
const dea = [[17,2014],[33,2022],[50,2026],[83,2028],[97,2026],[133,2019],[153,2011],[177,2006],[200,2001],[227,2000],[240,1999],[260,2001],[300,1998],[337,1996],[350,1992],[367,1985],[383,1977],[417,1965],[437,1959],[467,1957],[487,1957],[520,1960],[553,1965],[593,1968],[620,1965],[670,1962],[720,1962],[777,1960],[790,1955],[803,1938],[820,1917],[840,1903],[860,1898],[873,1898],[903,1903],[920,1902],[933,1890],[950,1872],[967,1865],[985,1863],[997,1866],[1040,1890],[1054,1898],[1064,1899]];
const macdLines = document.getElementById('macdLines');
addCurve(macdLines, diff, '#2a2a2a', 3);
addCurve(macdLines, dea, '#e8794a', 3.5);
```
